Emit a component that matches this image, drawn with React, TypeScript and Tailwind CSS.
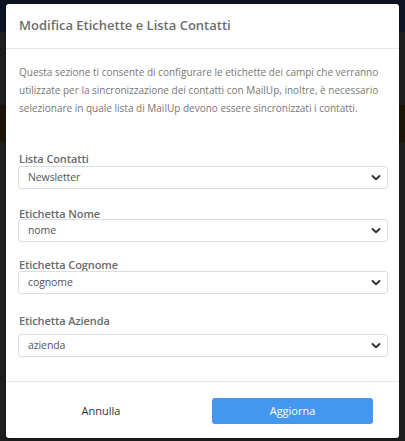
import React from "react";

const Chevron = () => (
  <svg width="10" height="7" viewBox="0 0 10 7" className="absolute right-[6px] top-1/2 -translate-y-1/2">
    <path d="M1.5 1.5 L5 4.8 L8.5 1.5" fill="none" stroke="#333" strokeWidth="1.9" strokeLinecap="round" strokeLinejoin="round" />
  </svg>
);

const Select = ({ value }: { value: string }) => (
  <div className="relative h-[23px] w-[370px] rounded-[3px] border border-[#d9dce3] bg-white flex items-center pl-[9px] text-[10.5px] text-[#555] tracking-[-0.1px]">
    {value}
    <Chevron />
  </div>
);

const Label = ({ children }: { children: React.ReactNode }) => (
  <div className="text-[11px] font-semibold text-[#6a6a6a] leading-[16px] tracking-[-0.1px]">{children}</div>
);

export default function App() {
  return (
    <div
      className="relative w-[405px] h-[441px] overflow-hidden bg-[#1e1e1e]"
      style={{ fontFamily: '"Open Sans", sans-serif' }}
    >
      <div className="h-[32px] bg-[#0d1322]" />
      <div className="h-[73px] bg-[#1e1e1e]" />
      <div className="h-[37px] bg-[#1b1507]" />
      <div className="absolute left-[6px] top-[4px] w-[393px] h-[434px] rounded-[3px] bg-white shadow-[0_1px_2px_rgba(0,0,0,0.4)] flex flex-col">
        <div className="h-[45px] border-b border-[#e6e6e6] flex items-center px-[13px]">
          <div className="text-[13px] font-semibold text-[#6d6d6d] tracking-[0px]">
            Modifica Etichette e Lista Contatti
          </div>
        </div>
        <div className="px-[13px] pt-[14px] flex-1">
          <p className="text-[10px] leading-[18px] text-[#777]">
            Questa sezione ti consente di configurare le etichette dei campi che verranno utilizzate per la
            sincronizzazione dei contatti con MailUp, inoltre, è necessario selezionare in quale lista di MailUp
            devono essere sincronizzati i contatti.
          </p>
          <div className="mt-[34px]">
            <Label>Lista Contatti</Label>
            <div className="mt-[-1px] -ml-[1px]">
              <Select value="Newsletter" />
            </div>
          </div>
          <div className="mt-[17px]">
            <Label>Etichetta Nome</Label>
            <div className="mt-[-3px] -ml-[1px]">
              <Select value="nome" />
            </div>
          </div>
          <div className="mt-[15px]">
            <Label>Etichetta Cognome</Label>
            <div className="mt-[-2px] -ml-[1px]">
              <Select value="cognome" />
            </div>
          </div>
          <div className="mt-[19px]">
            <Label>Etichetta Azienda</Label>
            <div className="mt-[5px] -ml-[1px]">
              <Select value="azienda" />
            </div>
          </div>
        </div>
        <div className="h-[57px] border-t border-[#e6e6e6] flex items-center pl-[12px] pr-[26px] pt-[2px]">
          <div className="w-[166px] text-center text-[11px] text-[#333]">Annulla</div>
          <div className="ml-auto w-[161px] h-[26px] rounded-[3px] bg-[#4596ef] flex items-center justify-center text-[11px] text-white">
            Aggiorna
          </div>
        </div>
      </div>
    </div>
  );
}
